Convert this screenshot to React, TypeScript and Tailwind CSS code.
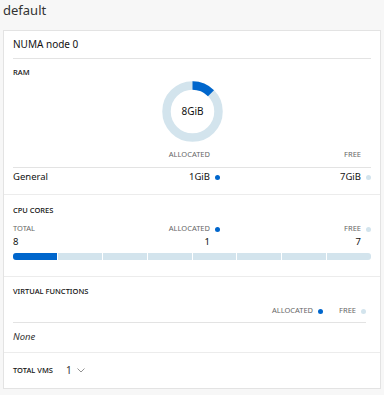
import * as React from "react";

const BLUE = "bg-[#0066cc]";
const TRACK = "bg-[#d3e4ed]";

function Dot({ color }: { color: string }) {
  return <span className={`ml-[5px] inline-block h-[5px] w-[5px] rounded-full ${color}`} />;
}

function Donut() {
  const r = 26;
  const c = 2 * Math.PI * r;
  const allocated = 1 / 8;
  return (
    <svg width="61" height="61" viewBox="0 0 61 61">
      <circle cx="30.5" cy="30.5" r={r} fill="none" stroke="#d3e4ed" strokeWidth="8.5" />
      <circle
        cx="30.5"
        cy="30.5"
        r={r}
        fill="none"
        stroke="#0066cc"
        strokeWidth="8.5"
        strokeDasharray={`${c * allocated} ${c}`}
        transform="rotate(-90 30.5 30.5)"
      />
      <text x="30.5" y="34" textAnchor="middle" fontSize="10" fill="#111" fontFamily="Noto Sans, sans-serif">
        8GiB
      </text>
    </svg>
  );
}

function Label({ children }: { children: React.ReactNode }) {
  return <div className="flex h-[12px] items-center text-[7.5px] font-medium text-[#111]">{children}</div>;
}

export default function App() {
  return (
    <div
      className="h-[395px] w-[384px] bg-[#f7f7f7] px-[3px] text-[#111]"
      style={{ fontFamily: '"Noto Sans", sans-serif' }}
    >
      <div className="flex h-[30px] items-start pt-[1px] text-[13px] text-[#333]">default</div>

      <div className="border border-[#e3e3e3] bg-white">
        {/* title */}
        <div className="px-[9px]">
          <div className="flex h-[28px] items-center border-b border-[#e3e3e3] text-[10px]">NUMA node 0</div>
        </div>

        {/* RAM */}
        <div className="border-b border-[#ececec] px-[9px]">
          <div className="pt-[8px]">
            <Label>RAM</Label>
          </div>
          <div className="mt-[2px] flex justify-center">
            <Donut />
          </div>
          <div className="mt-[7px] grid grid-cols-[1fr_100px_151px] border-b border-[#e3e3e3] pb-[6px] text-[7.5px] text-[#666]">
            <div />
            <div className="flex h-[12px] items-center justify-end pr-[10px]">ALLOCATED</div>
            <div className="flex h-[12px] items-center justify-end pr-[10px]">FREE</div>
          </div>
          <div className="grid h-[26px] grid-cols-[1fr_100px_151px] pb-[8px] text-[9.5px]">
            <div className="flex items-center">General</div>
            <div className="flex items-center justify-end">
              1GiB
              <Dot color={BLUE} />
            </div>
            <div className="flex items-center justify-end">
              7GiB
              <Dot color={TRACK} />
            </div>
          </div>
        </div>

        {/* CPU */}
        <div className="border-b border-[#ececec] px-[9px] pb-[16px]">
          <div className="pt-[10px]">
            <Label>CPU CORES</Label>
          </div>
          <div className="mt-[6px] grid grid-cols-[1fr_100px_151px] text-[7.5px] text-[#666]">
            <div className="flex h-[12px] items-center">TOTAL</div>
            <div className="flex h-[12px] items-center justify-end">
              ALLOCATED
              <Dot color={BLUE} />
            </div>
            <div className="flex h-[12px] items-center justify-end">
              FREE
              <Dot color={TRACK} />
            </div>
          </div>
          <div className="grid h-[15px] grid-cols-[1fr_100px_151px] text-[9.5px]">
            <div className="flex items-center">8</div>
            <div className="flex items-center justify-end pr-[10px]">1</div>
            <div className="flex items-center justify-end pr-[10px]">7</div>
          </div>
          <div className="mt-[3px] flex h-[7px] gap-px overflow-hidden rounded-[3px] bg-white">
            {Array.from({ length: 8 }).map((_, i) => (
              <div key={i} className={`flex-1 ${i === 0 ? BLUE : TRACK}`} />
            ))}
          </div>
        </div>

        {/* Virtual functions */}
        <div className="border-b border-[#ececec] px-[9px]">
          <div className="pt-[9px]">
            <Label>VIRTUAL FUNCTIONS</Label>
          </div>
          <div className="mr-[5px] mt-[7px] flex h-[18px] justify-end gap-[16px] border-b border-[#e3e3e3] pb-[6px] text-[7.5px] text-[#666]">
            <div className="flex h-[12px] items-center">
              ALLOCATED
              <Dot color={BLUE} />
            </div>
            <div className="flex h-[12px] items-center">
              FREE
              <Dot color={TRACK} />
            </div>
          </div>
          <div className="flex h-[29px] items-center text-[9.5px] italic text-[#333]">None</div>
        </div>

        {/* total VMs */}
        <div className="flex h-[35px] items-center px-[9px]">
          <span className="text-[7.5px] font-medium">TOTAL VMS</span>
          <span className="ml-[13px] text-[10px] text-[#333]">1</span>
          <svg className="ml-[5px]" width="8" height="5" viewBox="0 0 8 5">
            <path d="M0.5 0.5 L4 4 L7.5 0.5" fill="none" stroke="#777" strokeWidth="0.8" />
          </svg>
        </div>
      </div>
    </div>
  );
}
